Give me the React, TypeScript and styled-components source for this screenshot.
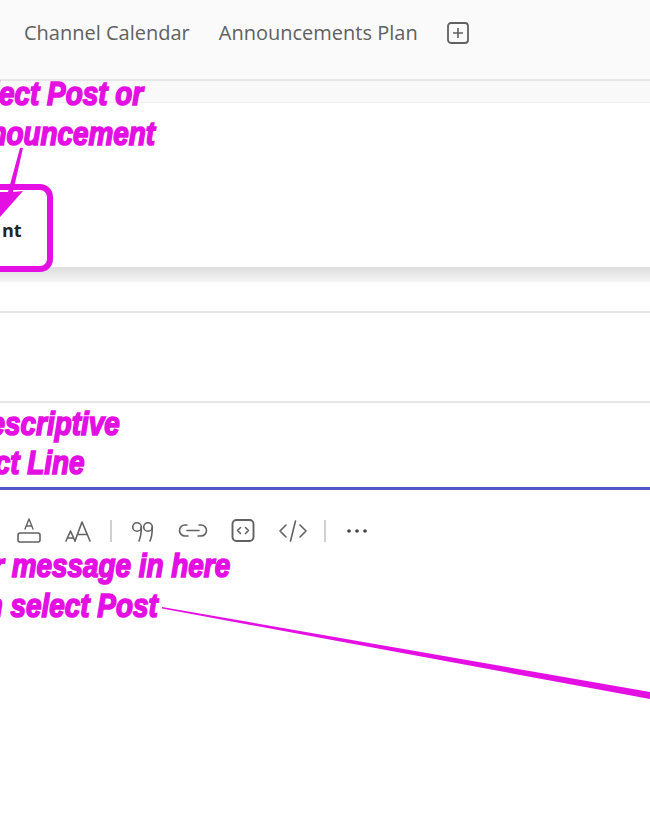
import React from 'react'
import styled, { createGlobalStyle } from 'styled-components'

const magenta = '#e30fe3'

const GlobalStyle = createGlobalStyle`
  html, body {
    margin: 0;
    padding: 0;
    background: #ffffff;
  }
`

function PlusBoxIcon() {
  return (
    <svg width="24" height="24" viewBox="0 0 24 24" fill="none" stroke="#616161">
      <rect x="2" y="2" width="20" height="20" rx="3" strokeWidth="1.8" />
      <path d="M12 7v10M7 12h10" strokeWidth="1.6" />
    </svg>
  )
}

function ToolIcon({ children }: { children: React.ReactNode }) {
  return (
    <svg width="30" height="26" viewBox="0 0 30 26" fill="none" stroke="#616161" strokeWidth="1.6" strokeLinecap="round" strokeLinejoin="round">
      {children}
    </svg>
  )
}

export default function App() {
  return (
    <Page>
      <GlobalStyle />
      <Header>
        <Tab>Channel Calendar</Tab>
        <Tab>Announcements Plan</Tab>
        <PlusBoxIcon />
      </Header>
      <Gutter />
      <TypeCard>
        <TypeLabel>nt</TypeLabel>
      </TypeCard>
      <Shadow />
      <Spacer />
      <TitleRow />
      <SubjectRow />
      <Toolbar>
        <ToolIcon>
          <path d="M11 11l4-10 4 10M12.500 8h5" strokeWidth="1.4" />
          <rect x="4" y="15" width="22" height="9" rx="2" />
        </ToolIcon>
        <ToolIcon>
          <path d="M2 23l4.500-10 4.500 10M3.500 20h6" />
          <path d="M11 23l7-19 8 19M14 16.500h9" />
        </ToolIcon>
        <Divider />
        <ToolIcon>
          <circle cx="9" cy="9" r="4.300" />
          <path d="M13.300 9c0 5-.5 10-2.300 14" />
          <circle cx="20" cy="9" r="4.300" />
          <path d="M24.300 9c0 5-.5 10-2.300 14" />
        </ToolIcon>
        <ToolIcon>
          <path d="M9 7H7a5.500 5.500 0 0 0 0 11h3M21 7h2a5.500 5.500 0 0 1 0 11h-3M9 12.500h12" />
        </ToolIcon>
        <ToolIcon>
          <rect x="4.500" y="2" width="21" height="21" rx="4" strokeWidth="1.9" />
          <path d="M12.500 9.500l-3 3 3 3M17.500 9.500l3 3-3 3" />
        </ToolIcon>
        <ToolIcon>
          <path d="M8 7l-6 6 6 6M22 7l6 6-6 6M17.500 3l-5 20" />
        </ToolIcon>
        <Divider />
        <ToolIcon>
          <circle cx="7" cy="13" r="1.800" fill="#424242" stroke="none" />
          <circle cx="15" cy="13" r="1.800" fill="#424242" stroke="none" />
          <circle cx="23" cy="13" r="1.800" fill="#424242" stroke="none" />
        </ToolIcon>
      </Toolbar>

      <Annotation $right={507} $top={73}>lect Post or</Annotation>
      <Annotation $right={495} $top={113}>nouncement</Annotation>
      <Annotation $right={530} $top={403}>escriptive</Annotation>
      <Annotation $right={565} $top={442}>ct Line</Annotation>
      <Annotation $right={420} $top={545}>r message in here</Annotation>
      <Annotation $right={492} $top={585}>n select Post</Annotation>

      <Highlight />
      <Arrows width="650" height="813" viewBox="0 0 650 813">
        <polygon points="20,148 23,148 13,192 23,191 -1,218 -6,192 8,192" fill={magenta} />
        <polygon points="162,607 650,692 650,699 162,608.500" fill={magenta} />
      </Arrows>
    </Page>
  )
}

const Page = styled.div`
  position: relative;
  width: 650px;
  height: 813px;
  overflow: hidden;
  background: #ffffff;
  font-family: 'Open Sans', 'Liberation Sans', sans-serif;
`

const Header = styled.div`
  display: flex;
  align-items: center;
  gap: 28px;
  height: 81px;
  padding: 0 0 13px 24px;
  box-sizing: border-box;
  background: #fafafa;
  border-bottom: 2px solid #e6e6e6;
`

const Tab = styled.span`
  font-size: 20px;
  line-height: 26px;
  color: #616161;
  & + & {
    margin-left: 1px;
  }
`

const Gutter = styled.div`
  height: 22px;
  box-sizing: border-box;
  background: #f9f9f9;
  border-bottom: 1px solid #eeeeee;
`

const TypeCard = styled.div`
  display: flex;
  align-items: center;
  height: 165px;
  background: #ffffff;
  border-bottom: 1px solid #e0e0e0;
  box-sizing: border-box;
`

const TypeLabel = styled.span`
  margin: 89px 0 0 2px;
  font-size: 18px;
  font-weight: 700;
  color: #242424;
`

const Shadow = styled.div`
  height: 14px;
  background: linear-gradient(#dedede, #f6f6f6);
`

const Spacer = styled.div`
  height: 29px;
`

const TitleRow = styled.div`
  height: 90px;
  box-sizing: border-box;
  border-top: 2px solid #e6e6e6;
`

const SubjectRow = styled.div`
  height: 86px;
  box-sizing: border-box;
  border-top: 2px solid #e6e6e6;
`

const Toolbar = styled.div`
  display: flex;
  align-items: center;
  gap: 20px;
  padding: 28px 0 0 14px;
  border-top: 3px solid #5258c8;
`

const Divider = styled.span`
  width: 2px;
  height: 22px;
  margin: 0 -4px;
  background: #d0d0d0;
`

const Annotation = styled.span<{ $right: number; $top: number }>`
  position: absolute;
  right: ${(props) => props.$right}px;
  top: ${(props) => props.$top}px;
  font-family: 'Liberation Sans', sans-serif;
  font-size: 34px;
  line-height: 40px;
  font-weight: 700;
  font-style: italic;
  white-space: nowrap;
  color: ${magenta};
  -webkit-text-stroke: 1.700px ${magenta};
  transform: scaleX(0.82);
  transform-origin: right center;
`

const Highlight = styled.div`
  position: absolute;
  left: -60px;
  top: 184px;
  width: 113px;
  height: 88px;
  box-sizing: border-box;
  border: 6px solid ${magenta};
  border-radius: 13px;
`

const Arrows = styled.svg`
  position: absolute;
  left: 0;
  top: 0;
  pointer-events: none;
`
